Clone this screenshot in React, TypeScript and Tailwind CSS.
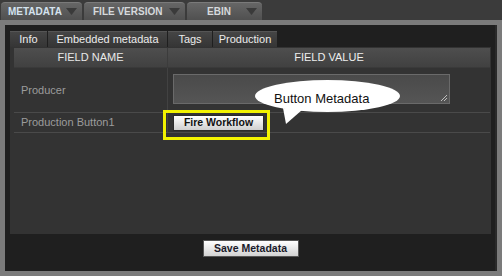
import React from "react";

const topTabs = [
  { label: "METADATA", w: "w-[81px]", active: true, pad: "pl-[7px]" },
  { label: "FILE VERSION", w: "w-[101px]", active: false, pad: "pl-[9px]" },
  { label: "EBIN", w: "w-[75px]", active: false, pad: "pl-[20px]" },
];

const innerTabs = [
  { label: "Info", w: "w-[37px]" },
  { label: "Embedded metadata", w: "w-[119px]" },
  { label: "Tags", w: "w-[44px]" },
  { label: "Production", w: "w-[64px]" },
];

function Caret() {
  return (
    <svg width="11" height="7" viewBox="0 0 11 7" className="shrink-0">
      <path d="M0 0 H11 L5.5 7 Z" fill="#3a3a3a" />
    </svg>
  );
}

export default function App() {
  return (
    <div className="relative w-[502px] h-[276px] overflow-hidden bg-[#3b3b3b] flex flex-col font-['Liberation_Sans',Arial,sans-serif]">
      {/* top tabs */}
      <div className="h-[20px] flex items-end gap-[2px] pl-[1px]">
        {topTabs.map((t) => (
          <div
            key={t.label}
            className={`${t.w} h-[18px] rounded-t-[4px] border-t border-[#7a7a7a] bg-gradient-to-b from-[#666666] to-[#505050] flex items-center justify-between ${t.pad} pr-[5px]`}
          >
            <span
              className={`text-[10px] font-bold leading-none ${t.active ? "text-[#d4e2ee]" : "text-[#d6d9dc]"}`}
            >
              {t.label}
            </span>
            <Caret />
          </div>
        ))}
      </div>

      {/* gray frame */}
      <div className="flex-1 bg-[#7b7b7b] p-[5px]">
        <div className="h-full bg-[#1f1f1f] border-r-2 border-[#2a2a2a] flex flex-col pt-[6px] pl-[5px] pr-[4px] pb-[7px]">
          {/* inner tabs */}
          <div className="h-[16px] flex gap-[1px] shrink-0">
            {innerTabs.map((t) => (
              <div
                key={t.label}
                className={`${t.w} h-full border-t border-[#555555] bg-gradient-to-b from-[#454545] to-[#353535] flex items-center justify-center text-[11px] leading-none text-[#ececec]`}
              >
                {t.label}
              </div>
            ))}
          </div>

          {/* content panel */}
          <div className="flex-1 bg-[#333333] pl-[4px] pr-[1px] pt-[1px]">
            <div className="flex flex-col">
              <div className="h-[20px] flex bg-gradient-to-b from-[#4e4e4e] to-[#414141] border-b border-[#3a3a3a]">
                <div className="w-[153px] flex items-center justify-center text-[11px] text-[#e8e8e8]">
                  FIELD NAME
                </div>
                <div className="w-px bg-[#3c3c3c]" />
                <div className="flex-1 flex items-center justify-center text-[11px] text-[#eeeeee]">
                  FIELD VALUE
                </div>
              </div>

              <div className="h-[45px] flex border-b border-[#4a4a4a]">
                <div className="w-[153px] flex items-center pl-[7px] text-[11px] text-[#9c9c9c]">
                  Producer
                </div>
                <div className="w-px bg-[#424242]" />
                <div className="flex-1 pl-[5px] pt-[6px]">
                  <div className="relative w-[277px] h-[30px] border border-[#6a6a6a] bg-gradient-to-b from-[#4a4a4a] to-[#555555]">
                    <svg width="8" height="8" viewBox="0 0 8 8" className="absolute right-[1px] bottom-[1px]">
                      <path d="M7 1 L1 7 M7 4 L4 7" stroke="#bdbdbd" strokeWidth="1" />
                    </svg>
                  </div>
                </div>
              </div>

              <div className="h-[20px] flex border-b border-[#4a4a4a]">
                <div className="w-[153px] flex items-center pl-[7px] text-[11px] text-[#9c9c9c]">
                  Production Button1
                </div>
                <div className="w-px bg-[#424242]" />
                <div className="flex-1 flex items-center pl-[5px]">
                  <div className="w-[91px] h-[16px] border border-[#2a2a2a] bg-gradient-to-b from-[#ffffff] to-[#cfcfcf] flex items-center justify-center text-[10.5px] font-bold text-[#111111] leading-none">
                    Fire Workflow
                  </div>
                </div>
              </div>
            </div>
          </div>

          {/* save button */}
          <div className="h-[30px] shrink-0 flex justify-center pt-[6px]">
            <div className="w-[96px] h-[17px] border border-[#555555] bg-gradient-to-b from-[#ffffff] to-[#d2d2d2] flex items-center justify-center text-[10.5px] font-bold text-[#1a1a2a] leading-none">
              Save Metadata
            </div>
          </div>
        </div>
      </div>

      {/* highlight + callout */}
      <div className="absolute left-[163px] top-[110px] w-[107px] h-[30px] border-[3px] border-[#f2f200]" />
      <svg width="160" height="52" viewBox="0 0 160 52" className="absolute left-[250px] top-[76px]">
        <ellipse cx="77.5" cy="20" rx="72.5" ry="16" fill="#ffffff" />
        <path d="M33 32 L52 34 L36 48 Z" fill="#ffffff" />
      </svg>
      <div className="absolute left-[274px] top-[89px] text-[13px] leading-[20px] text-[#111111]">
        Button Metadata
      </div>
    </div>
  );
}
